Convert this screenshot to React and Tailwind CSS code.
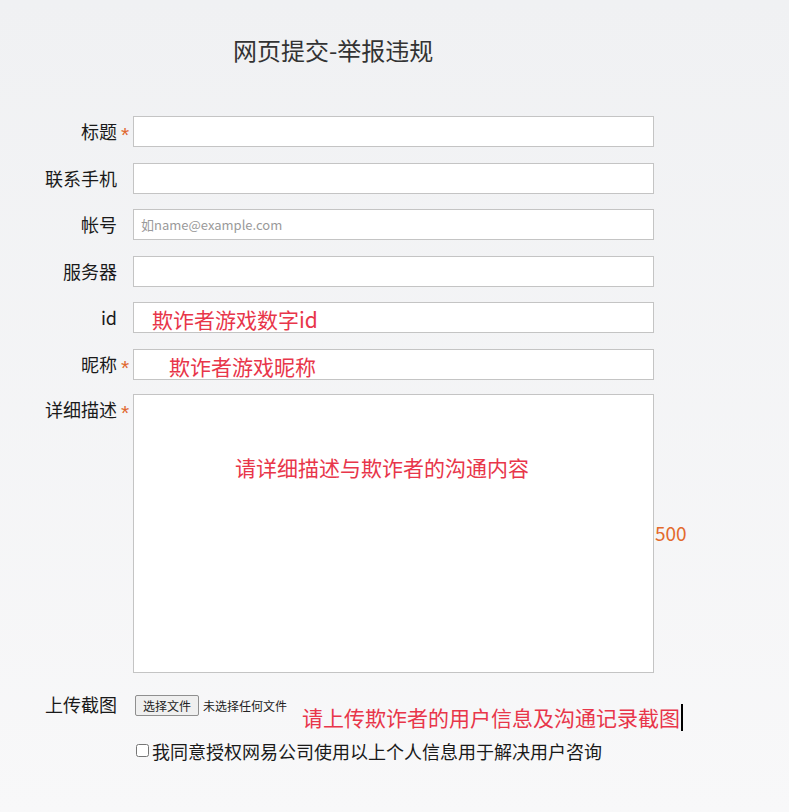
import React from 'react';

// ── Field row ──────────────────────────────────────────────────────────────────
function Row({ label, required, children }) {
  return (
    <div className="flex h-[31px] items-center">
      <span className="w-[117px] text-right text-[18px] leading-[31px] text-[#1a1a1a]">{label}</span>
      <Star show={required} />
      {children}
    </div>
  );
}

function Star({ show }) {
  return (
    <span
      className="w-[16px] h-[31px] pl-[4px] pt-[3px] text-[21px] leading-[31px] text-[#e0662e]"
      style={{ fontFamily: '"Liberation Sans", Arial, sans-serif' }}
    >
      {show ? '*' : ''}
    </span>
  );
}

const box = 'w-[521px] h-[31px] border border-[#c4c4c4] bg-white';

export default function App() {
  return (
    <div
      className="min-h-screen w-full bg-gradient-to-b from-[#f0f1f3] to-[#f8f8f9] pb-[40px]"
      style={{ fontFamily: '"Noto Sans CJK SC", "Microsoft YaHei", sans-serif' }}
    >
      {/* Title */}
      <div className="pt-[38px] pl-[233px] text-[24px] leading-[24px] text-[#333]">网页提交-举报违规</div>

      {/* Form */}
      <div className="mt-[54px] flex flex-col gap-[15.6px]">
        <Row label="标题" required>
          <div className={box} />
        </Row>
        <Row label="联系手机">
          <div className={box} />
        </Row>
        <Row label="帐号">
          <input
            type="text"
            placeholder="如name@example.com"
            className={`${box} px-[7px] text-[13px] outline-none placeholder:text-[#9a9a9a]`}
          />
        </Row>
        <Row label="服务器">
          <div className={box} />
        </Row>
        <Row label="id">
          <div className={`${box} pl-[18px] text-[21px] leading-[33px] text-[#e8364a]`}>欺诈者游戏数字id</div>
        </Row>
        <Row label="昵称" required>
          <div className={`${box} pl-[35px] text-[21px] leading-[33px] text-[#e8364a]`}>欺诈者游戏昵称</div>
        </Row>
      </div>

      {/* Description */}
      <div className="mt-[14px] flex items-stretch">
        <span className="w-[117px] text-right text-[18px] leading-[31px] text-[#1a1a1a]">详细描述</span>
        <Star show />
        <div className="w-[521px] h-[279px] border border-[#c4c4c4] bg-white pt-[62px] pl-[101px] text-[21px] leading-[21px] text-[#e8364a]">
          请详细描述与欺诈者的沟通内容
        </div>
        <span className="self-center ml-[1px] text-[19px] text-[#e36a2c]">500</span>
      </div>

      {/* Upload */}
      <div className="mt-[17px] flex items-start">
        <span className="w-[117px] text-right text-[18px] leading-[28px] text-[#1a1a1a]">上传截图</span>
        <button className="ml-[18px] mt-[5px] h-[21px] w-[64px] rounded-[2px] border border-[#8f8f8f] bg-[#efefef] text-[12px] leading-[19px] text-[#222]">
          选择文件
        </button>
        <span className="ml-[4px] mt-[5px] text-[12px] leading-[21px] text-[#222]">未选择任何文件</span>
        <span className="ml-[15px] mt-[17px] text-[21px] leading-[21px] text-[#e8364a]">请上传欺诈者的用户信息及沟通记录截图</span>
        <span className="ml-[1px] mt-[14px] h-[27px] w-[2px] bg-black" />
      </div>

      {/* Agreement */}
      <label className="mt-[8px] flex items-center pl-[136px] text-[18px] leading-[24px] text-[#1a1a1a]">
        <input type="checkbox" className="m-0 mr-[3px] h-[13px] w-[13px]" />
        我同意授权网易公司使用以上个人信息用于解决用户咨询
      </label>
    </div>
  );
}
